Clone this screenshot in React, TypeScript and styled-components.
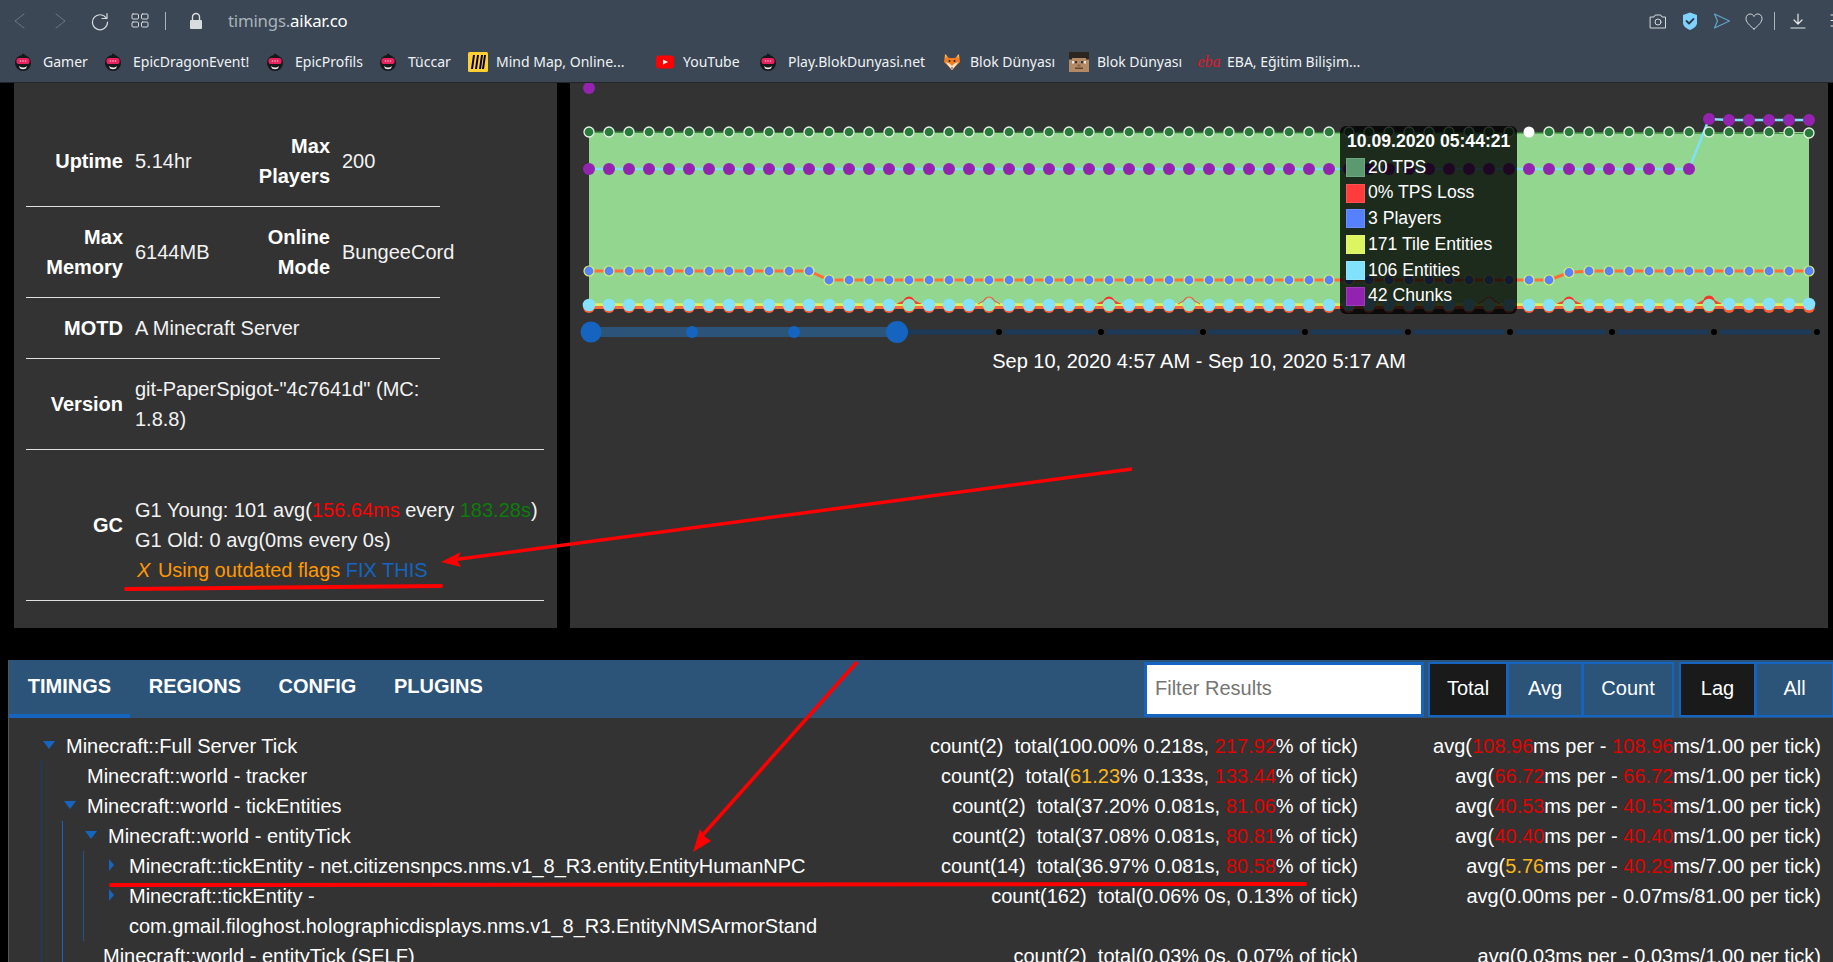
import React from "react"
import styled, { createGlobalStyle } from "styled-components"

const GlobalStyle = createGlobalStyle`
	html, body {
		margin: 0;
		padding: 0;
		background: #000;
		overflow: hidden;
	}
	* {
		box-sizing: border-box;
	}
`

const Page = styled.div`
	position: relative;
	width: 1833px;
	height: 962px;
	overflow: hidden;
	background: #000;
	color: #fff;
	font-family: "Liberation Sans", Arial, sans-serif;
	font-size: 20px;
	line-height: 30px;
`

/* browser chrome */
const Chrome = styled.header`
	height: 83px;
	background: #3b4754;
	border-bottom: 1px solid #20262c;
	font-family: "Noto Sans", sans-serif;
`

const Toolbar = styled.div`
	display: flex;
	align-items: center;
	height: 42px;
	overflow: hidden;
`

const Slot = styled.span<{ $w: number }>`
	flex: none;
	display: flex;
	align-items: center;
	justify-content: center;
	width: ${p => p.$w}px;
`

const Divider = styled.span`
	width: 1px;
	height: 18px;
	background: #aab2ba;
`

const Url = styled.div`
	margin-left: 6px;
	font-size: 16.8px;
	letter-spacing: -0.2px;
	color: #a9b2bb;

	b {
		font-weight: 400;
		color: #fff;
	}
`

const ToolbarEnd = styled.div`
	margin-left: auto;
	display: flex;
	align-items: center;
	margin-right: -10px;
`

const Bookmarks = styled.nav`
	display: flex;
	align-items: center;
	height: 40px;
	padding-left: 15px;
`

const Bookmark = styled.a<{ $w: number }>`
	flex: none;
	display: flex;
	align-items: center;
	gap: 8px;
	width: ${p => p.$w}px;
	font-size: 14px;
	line-height: 20px;
	color: #eef2f6;
	white-space: nowrap;
`

const Favicon = styled.span`
	flex: none;
	display: flex;
	align-items: center;
	justify-content: center;
	width: 20px;
	height: 20px;
`

const EbaMark = styled.span`
	font-family: "Liberation Serif", serif;
	font-style: italic;
	font-size: 16px;
	color: #e0182d;
`

/* top panels */
const TopRow = styled.section`
	display: flex;
	gap: 13px;
	padding-left: 14px;
`

const Panel = styled.div<{ $w: number }>`
	position: relative;
	width: ${p => p.$w}px;
	height: 545px;
	background: #333;
`

const InfoList = styled.div`
	padding: 33px 0 0 12px;
`

const InfoRow = styled.div<{ $wide?: boolean }>`
	display: flex;
	align-items: center;
	gap: 12px;
	width: ${p => (p.$wide ? 518 : 414)}px;
	padding: 15px 0;
	border-bottom: 1px solid #e0e0e0;
`

const InfoLabel = styled.div`
	flex: none;
	width: 97px;
	font-weight: 700;
	text-align: right;
`

const InfoValue = styled.div<{ $w?: number }>`
	flex: none;
	width: ${p => (p.$w ? `${p.$w}px` : "auto")};
	color: #f2f2f2;
	white-space: ${p => (p.$w ? "nowrap" : "normal")};
`

const VersionValue = styled(InfoValue)`
	max-width: 300px;
`

const GcValue = styled(InfoValue)`
	padding-top: 30px;
`

const Tint = styled.span<{ $c: string }>`
	color: ${p => p.$c};
`

const FlagMark = styled.span`
	display: inline-block;
	margin: 0 2px;
	font-style: italic;
	color: #ff9800;
`

const ChartArea = styled.div`
	position: relative;
`

const ChartSvg = styled.svg`
	display: block;
`

const DateRange = styled.div`
	margin-top: -22px;
	text-align: center;
	color: #fff;
`

const Tooltip = styled.div`
	position: absolute;
	left: 770px;
	top: 43px;
	width: 177px;
	height: 188px;
	padding: 3px 7px;
	border-radius: 6px;
	background: rgba(0, 0, 0, 0.8);
	font-size: 17.6px;
	line-height: 25.7px;
`

const TipTitle = styled.div`
	font-weight: 700;
	white-space: nowrap;
`

const TipRow = styled.div`
	display: flex;
	align-items: center;
	gap: 3px;
	white-space: nowrap;
`

const Swatch = styled.span<{ $c: string }>`
	flex: none;
	width: 19px;
	height: 19px;
	margin-left: -1px;
	background: ${p => p.$c};
	border: 1px solid rgba(255, 255, 255, 0.12);
`

/* timings */
const Timings = styled.section`
	margin: 32px 0 0 8px;
	background: #333;
	border-left: 1px solid #555;
`

const TabBar = styled.div`
	display: flex;
	align-items: flex-start;
	height: 58px;
	background: #2c5378;
`

const Tab = styled.div<{ $active?: boolean }>`
	height: 58px;
	padding: 11px 18.8px 0;
	font-weight: 700;
	line-height: 30px;
	border-bottom: 4px solid ${p => (p.$active ? "#1565c0" : "transparent")};
`

const TabTools = styled.div`
	margin-left: auto;
	display: flex;
	padding-top: 2px;
`

const FilterInput = styled.input`
	width: 280px;
	height: 55px;
	margin-right: 5px;
	padding: 0 8px 2px;
	background: #fff;
	border: 3px solid #1565c0;
	font-family: inherit;
	font-size: 20px;
	outline: none;

	&::placeholder {
		color: #757575;
		opacity: 1;
	}
`

const ToggleGroup = styled.div`
	display: flex;
	height: 55px;
	margin-right: 6px;

	&:last-child {
		margin-right: -1px;
	}
`

const ToggleButton = styled.div<{ $w: number; $active?: boolean }>`
	display: flex;
	align-items: center;
	justify-content: center;
	width: ${p => p.$w}px;
	padding-bottom: 3px;
	border: 2px solid #1565c0;
	margin-left: -1px;
	background: ${p => (p.$active ? "#1a1a1a" : "#2c5378")};
`

const Tree = styled.div`
	padding: 13px 0 0 11px;
`

const Group = styled.div<{ $m: number; $c: string }>`
	margin-left: ${p => p.$m}px;
	border-left: 1px solid ${p => p.$c};
`

const Row = styled.div<{ $pad: number }>`
	display: flex;
	align-items: flex-start;
	padding: 0 12px 0 ${p => p.$pad}px;
`

const Name = styled.div`
	position: relative;
	flex: 1;
	min-width: 0;
`

const Caret = styled.svg<{ $top: number }>`
	position: absolute;
	left: -23px;
	top: ${p => p.$top}px;
`

const TotalCol = styled.div`
	flex: none;
	width: 430px;
	text-align: right;
	white-space: pre;
`

const AvgCol = styled.div`
	flex: none;
	width: 463px;
	text-align: right;
	white-space: pre;
`

const Annotations = styled.svg`
	position: absolute;
	left: 0;
	top: 0;
	pointer-events: none;
`

/* small drawn icons */
const Glyph: React.FC<{ w?: number; h?: number; children: React.ReactNode }> = ({ w = 20, h = 20, children }) => (
	<svg width={w} height={h} viewBox={`0 0 ${w} ${h}`} fill="none" strokeLinecap="round" strokeLinejoin="round">
		{children}
	</svg>
)

const Mascot = () => (
	<Glyph>
		<g transform="translate(-2 0)">
			<path d="M9 1.500c3 .5 3.500 2 3.500 3L9 4z" fill="#17181a" />
			<circle cx="10" cy="11" r="8" fill="#17181a" />
			<rect x="3.500" y="6" width="13" height="6" rx="2.600" fill="#e8215f" />
			<path d="M6 14c2.500 2 5.500 2 8 0l-1 2.500c-2 1-4 1-6 0z" fill="#eee" />
			<circle cx="7.500" cy="9" r=".8" fill="#f7b9cb" />
			<circle cx="10" cy="9" r=".8" fill="#f7b9cb" />
			<circle cx="12.500" cy="9" r=".8" fill="#f7b9cb" />
		</g>
	</Glyph>
)

const Miro = () => (
	<Glyph>
		<rect width="20" height="20" rx="1.500" fill="#ffd02f" />
		<path d="M7 3 5 17H3L5 3zM11 3 9 17H7l2-14zM15 3l-2 14h-2l2-14zM18 3l-2 14h-2l2-14z" fill="#050038" />
	</Glyph>
)

const YouTube = () => (
	<Glyph w={18} h={20}>
		<rect y="3.500" width="18" height="13" rx="3" fill="#f00" />
		<path d="M7 7.500 12 10l-5 2.500z" fill="#fff" />
	</Glyph>
)

const Fox = () => (
	<Glyph>
		<path d="M3 2l4 4h6l4-4 1 8-8 8-8-8z" fill="#ef7d22" />
		<path d="M3.500 10 10 18l6.500-8-4 1.500L10 14l-2.500-2.500z" fill="#fbe6d2" />
		<path d="M3 2l2 2-1.500 3zM17 2l-2 2 1.500 3z" fill="#e8c05a" />
		<circle cx="7.500" cy="9" r="1" fill="#3b1d08" />
		<circle cx="12.500" cy="9" r="1" fill="#3b1d08" />
		<path d="M9 15.500h2l-1 1.500z" fill="#3b1d08" />
	</Glyph>
)

const SteveFace = () => (
	<Glyph>
		<rect width="20" height="20" fill="#b48a66" />
		<rect width="20" height="6" fill="#2d2620" />
		<rect y="6" width="3" height="1.500" fill="#2d2620" />
		<rect x="17" y="6" width="3" height="1.500" fill="#2d2620" />
		<rect x="3" y="9" width="5" height="2.500" fill="#efe7dd" />
		<rect x="12" y="9" width="5" height="2.500" fill="#efe7dd" />
		<rect x="5.500" y="9" width="2.500" height="2.500" fill="#3f3226" />
		<rect x="12" y="9" width="2.500" height="2.500" fill="#3f3226" />
		<rect x="8.500" y="12.500" width="3" height="2" fill="#8a6646" />
		<rect x="6" y="15.500" width="8" height="1.500" fill="#5f4532" />
	</Glyph>
)

const bookmarks: { label: string; w: number; icon: React.ReactNode }[] = [
	{ label: "Gamer", w: 90, icon: <Mascot /> },
	{ label: "EpicDragonEvent!", w: 162, icon: <Mascot /> },
	{ label: "EpicProfils", w: 113, icon: <Mascot /> },
	{ label: "Tüccar", w: 88, icon: <Mascot /> },
	{ label: "Mind Map, Online...", w: 187, icon: <Miro /> },
	{ label: "YouTube", w: 105, icon: <YouTube /> },
	{ label: "Play.BlokDunyasi.net", w: 182, icon: <Mascot /> },
	{ label: "Blok Dünyası", w: 127, icon: <Fox /> },
	{ label: "Blok Dünyası", w: 130, icon: <SteveFace /> },
	{ label: "EBA, Eğitim Bilişim...", w: 200, icon: <EbaMark>eba</EbaMark> },
]

/* chart data, in page pixels */
const POINTS = 62
const px = (i: number) => 589 + 20 * i
const idx = Array.from({ length: POINTS }, (_, i) => i)
const bumps: Record<number, number> = { 16: 298, 20: 299, 26: 298, 30: 299, 45: 299, 49: 298, 56: 297 }
const hollowBumps = [20, 30, 45]

const playersY = (i: number) => {
	if (i <= 11) return 271
	if (i <= 48) return 280
	if (i === 49) return 272.5
	return 271
}
const chunksY = (i: number) => (i >= 56 ? (i === 56 ? 119 : 120) : 169)
const entitiesY = (i: number) => (i >= 57 ? 304 : 305)

const line = (fn: (i: number) => number) => idx.map(i => `${px(i)},${fn(i)}`).join(" ")

const sliderTicks = [999, 1101, 1203, 1305, 1408, 1510, 1612, 1714, 1817]

const Chart = () => (
	<ChartSvg width="1258" height="285" viewBox="570 83 1258 285">
		<polygon points={`589,132 1809,132 1809,307 589,307`} fill="#92d68f" />
		<line x1="589" y1="132" x2="1809" y2="133" stroke="#2e7d32" strokeWidth="1.5" />

		<line x1="589" y1="305" x2="1809" y2="305" stroke="#e4ee5c" strokeWidth="3.500" />
		<line x1="589" y1="307.500" x2="1809" y2="307.500" stroke="#ff6a3c" strokeWidth="3" />
		{Object.keys(bumps).map(k => {
			const i = Number(k)
			return hollowBumps.includes(i) ? (
				<g key={k}>
					<path d={`M${px(i) - 11} 304 L${px(i) - 4} 300 M${px(i) + 4} 300 L${px(i) + 11} 304`} stroke="#f0554a" strokeWidth="1" />
					<circle cx={px(i)} cy={bumps[i] + 3} r="5" fill="#a5d98f" stroke="#f0554a" strokeWidth="1.200" />
				</g>
			) : (
				<g key={k}>
					<path d={`M${px(i) - 13} 304 L${px(i)} ${bumps[i]} L${px(i) + 13} 304z`} fill="#f8442c" />
					<circle cx={px(i)} cy={bumps[i] + 4} r="5.500" fill="#f8342c" />
				</g>
			)
		})}
		{idx.map(i => (
			<circle key={i} cx={px(i)} cy="307" r="6" fill="#ff5a30" />
		))}

		<polyline points={line(playersY)} stroke="#ff6e3a" strokeWidth="3" fill="none" />
		{idx.map(i => (
			<circle key={i} cx={px(i)} cy={playersY(i)} r="5" fill="#5682ff" stroke="#dcee72" strokeWidth="1.200" />
		))}

		{idx.map(i => (
			<circle key={i} cx={px(i)} cy={entitiesY(i)} r="6.300" fill={bumps[i] ? "#8ce6cc" : "#84e2ff"} />
		))}

		<polyline points={line(chunksY)} stroke="#7fe0f7" strokeWidth="2.500" fill="none" />
		<circle cx="589" cy="88" r="6" fill="#9423b0" />
		{idx.map(i => (
			<circle key={i} cx={px(i)} cy={chunksY(i)} r="6" fill="#9423b0" />
		))}

		{idx.map(i =>
			i === 47 ? (
				<circle key={i} cx={px(i)} cy="132" r="5.500" fill="#fff" />
			) : (
				<circle key={i} cx={px(i)} cy={i === 61 ? 133 : 132} r="5" fill="#2a7a3c" stroke="#e6f2e6" strokeWidth="1.300" />
			)
		)}

		<rect x="591" y="329.500" width="1226" height="5" fill="#1c3a57" />
		<rect x="591" y="327" width="306" height="10" fill="#2c5378" />
		{sliderTicks.map(x => (
			<g key={x}>
				<circle cx={x} cy="332" r="6" fill="#333" />
				<circle cx={x} cy="332" r="3" fill="#000" />
			</g>
		))}
		<circle cx="692" cy="332" r="6" fill="#1565c0" />
		<circle cx="794" cy="332" r="6" fill="#1565c0" />
		<circle cx="591" cy="332" r="10.500" fill="#1565c0" />
		<circle cx="897" cy="332" r="11" fill="#1565c0" />
	</ChartSvg>
)

type Cell = { v: string; c?: string }
const RED = "#e10000"
const AMBER = "#f9b71e"

const Vals: React.FC<{ parts: (string | Cell)[] }> = ({ parts }) => (
	<>
		{parts.map((p, i) => (typeof p === "string" ? <span key={i}>{p}</span> : <Tint key={i} $c={p.c || RED}>{p.v}</Tint>))}
	</>
)

const Down = () => (
	<Caret $top={9} width="12" height="10" viewBox="0 0 12 10">
		<path d="M0 1h12L6 9z" fill="#1565c0" />
	</Caret>
)

const Right = () => (
	<Caret $top={8} width="12" height="12" viewBox="0 0 12 12">
		<path d="M3 0l5 6-5 6z" fill="#1565c0" />
	</Caret>
)

const TimingRow: React.FC<{
	pad?: number
	caret?: React.ReactNode
	name: string
	total: (string | Cell)[]
	avg: (string | Cell)[]
}> = ({ pad = 45, caret, name, total, avg }) => (
	<Row $pad={pad}>
		<Name>{caret}{name}</Name>
		<TotalCol><Vals parts={total} /></TotalCol>
		<AvgCol><Vals parts={avg} /></AvgCol>
	</Row>
)

export default function App() {
	return (
		<Page>
			<GlobalStyle />
			<Chrome>
				<Toolbar>
					<Slot $w={40}>
						<Glyph><path d="M14 3 5 10l9 7" stroke="#6d7883" strokeWidth="1" /></Glyph>
					</Slot>
					<Slot $w={40}>
						<Glyph><path d="M6 3l9 7-9 7" stroke="#6d7883" strokeWidth="1" /></Glyph>
					</Slot>
					<Slot $w={40}>
						<Glyph>
							<path d="M16.500 7.500A7.500 7.500 0 1 0 17.500 11" stroke="#d5dade" strokeWidth="1.200" />
							<path d="M17 2.500v5h-5" stroke="#d5dade" strokeWidth="1.200" />
						</Glyph>
					</Slot>
					<Slot $w={40}>
						<Glyph>
							<rect x="2" y="3" width="6.500" height="5" rx="1" stroke="#d5dade" />
							<rect x="11.500" y="3" width="6.500" height="5" rx="1" stroke="#d5dade" />
							<rect x="2" y="11" width="6.500" height="5" rx="1" stroke="#d5dade" />
							<rect x="11.500" y="11" width="6.500" height="5" rx="1" stroke="#d5dade" />
						</Glyph>
					</Slot>
					<Slot $w={10}><Divider /></Slot>
					<Slot $w={52}>
						<Glyph>
							<rect x="4" y="9" width="12" height="9" rx="1" fill="#d8dcdf" />
							<path d="M6.500 9V6a3.500 3.500 0 0 1 7 0v3" stroke="#d8dcdf" strokeWidth="1.400" />
						</Glyph>
					</Slot>
					<Url>timings.<b>aikar.co</b></Url>
					<ToolbarEnd>
						<Slot $w={32}>
							<Glyph>
								<path d="M2.500 6h3.500l1.200-2h5.600L14 6h3.500v11h-15z" stroke="#d5dade" />
								<circle cx="10" cy="11" r="3" stroke="#d5dade" />
							</Glyph>
						</Slot>
						<Slot $w={32}>
							<Glyph>
								<path d="M10 1.500 17 4v8c0 3.500-3.500 5.500-7 7-3.500-1.500-7-3.500-7-7V4z" fill="#7fd2ff" />
								<path d="M6.500 10l2.500 2.500 4.500-4.500" stroke="#2b3b4a" strokeWidth="1.800" />
							</Glyph>
						</Slot>
						<Slot $w={32}>
							<Glyph><path d="M2.500 3l15 7-15 7 3-7z" stroke="#5fa4cc" strokeWidth="1.200" /></Glyph>
						</Slot>
						<Slot $w={32}>
							<Glyph>
								<path d="M10 18C5 14 2 11 2 7.500 2 4.500 4.200 3 6.200 3 8 3 9.300 4 10 5.500 10.700 4 12 3 13.800 3c2 0 4.200 1.500 4.200 4.500 0 3.500-3 6.500-8 10.500z" stroke="#d5dade" />
							</Glyph>
						</Slot>
						<Slot $w={8}><Divider /></Slot>
						<Slot $w={4} />
						<Slot $w={32}>
							<Glyph>
								<path d="M10 3v10M6 9l4 4 4-4M3 17h14" stroke="#e4e7ea" strokeWidth="1.200" />
							</Glyph>
						</Slot>
						<Slot $w={9} />
						<Slot $w={20}>
							<Glyph>
								<path d="M8 4h6M8 9.500h6M8 15h6" stroke="#e4e7ea" />
							</Glyph>
						</Slot>
					</ToolbarEnd>
				</Toolbar>
				<Bookmarks>
					{bookmarks.map((b, i) => (
						<Bookmark key={i} $w={b.w}>
							<Favicon>{b.icon}</Favicon>
							{b.label}
						</Bookmark>
					))}
				</Bookmarks>
			</Chrome>

			<TopRow>
				<Panel $w={543}>
					<InfoList>
						<InfoRow>
							<InfoLabel>Uptime</InfoLabel>
							<InfoValue $w={86}>5.14hr</InfoValue>
							<InfoLabel>Max Players</InfoLabel>
							<InfoValue $w={100}>200</InfoValue>
						</InfoRow>
						<InfoRow>
							<InfoLabel>Max Memory</InfoLabel>
							<InfoValue $w={86}>6144MB</InfoValue>
							<InfoLabel>Online Mode</InfoLabel>
							<InfoValue $w={100}>BungeeCord</InfoValue>
						</InfoRow>
						<InfoRow>
							<InfoLabel>MOTD</InfoLabel>
							<InfoValue>A Minecraft Server</InfoValue>
						</InfoRow>
						<InfoRow $wide>
							<InfoLabel>Version</InfoLabel>
							<VersionValue>git-PaperSpigot-"4c7641d" (MC: 1.8.8)</VersionValue>
						</InfoRow>
						<InfoRow $wide>
							<InfoLabel>GC</InfoLabel>
							<GcValue>
								<div>
									G1 Young: 101 avg(<Tint $c="#f00">156.64ms</Tint> every <Tint $c="#0b7d0b">183.28s</Tint>)
								</div>
								<div>G1 Old: 0 avg(0ms every 0s)</div>
								<div>
									<FlagMark>X</FlagMark> <Tint $c="#ff9800">Using outdated flags</Tint> <Tint $c="#1565c0">FIX THIS</Tint>
								</div>
							</GcValue>
						</InfoRow>
					</InfoList>
				</Panel>
				<Panel $w={1258}>
					<ChartArea>
						<Chart />
						<Tooltip>
							<TipTitle>10.09.2020 05:44:21</TipTitle>
							<TipRow><Swatch $c="#5a9a6e" />20 TPS</TipRow>
							<TipRow><Swatch $c="#ff3b3b" />0% TPS Loss</TipRow>
							<TipRow><Swatch $c="#5580ff" />3 Players</TipRow>
							<TipRow><Swatch $c="#dcf560" />171 Tile Entities</TipRow>
							<TipRow><Swatch $c="#80e2ff" />106 Entities</TipRow>
							<TipRow><Swatch $c="#9222b0" />42 Chunks</TipRow>
						</Tooltip>
					</ChartArea>
					<DateRange>Sep 10, 2020 4:57 AM - Sep 10, 2020 5:17 AM</DateRange>
				</Panel>
			</TopRow>

			<Timings>
				<TabBar>
					<Tab $active>TIMINGS</Tab>
					<Tab>REGIONS</Tab>
					<Tab>CONFIG</Tab>
					<Tab>PLUGINS</Tab>
					<TabTools>
						<FilterInput placeholder="Filter Results" />
						<ToggleGroup>
							<ToggleButton $w={80} $active>Total</ToggleButton>
							<ToggleButton $w={76}>Avg</ToggleButton>
							<ToggleButton $w={92}>Count</ToggleButton>
						</ToggleGroup>
						<ToggleGroup>
							<ToggleButton $w={77} $active>Lag</ToggleButton>
							<ToggleButton $w={79}>All</ToggleButton>
						</ToggleGroup>
					</TabTools>
				</TabBar>
				<Tree>
					<TimingRow
						pad={46}
						caret={<Down />}
						name="Minecraft::Full Server Tick"
						total={["count(2)  total(100.00% 0.218s, ", { v: "217.92" }, "% of tick)"]}
						avg={["avg(", { v: "108.96" }, "ms per - ", { v: "108.96" }, "ms/1.00 per tick)"]}
					/>
					<Group $m={21} $c="#123f70">
						<TimingRow
							name="Minecraft::world - tracker"
							total={["count(2)  total(", { v: "61.23", c: AMBER }, "% 0.133s, ", { v: "133.44" }, "% of tick)"]}
							avg={["avg(", { v: "66.72" }, "ms per - ", { v: "66.72" }, "ms/1.00 per tick)"]}
						/>
						<TimingRow
							caret={<Down />}
							name="Minecraft::world - tickEntities"
							total={["count(2)  total(37.20% 0.081s, ", { v: "81.06" }, "% of tick)"]}
							avg={["avg(", { v: "40.53" }, "ms per - ", { v: "40.53" }, "ms/1.00 per tick)"]}
						/>
						<Group $m={20} $c="#1565c0">
							<TimingRow
								caret={<Down />}
								name="Minecraft::world - entityTick"
								total={["count(2)  total(37.08% 0.081s, ", { v: "80.81" }, "% of tick)"]}
								avg={["avg(", { v: "40.40" }, "ms per - ", { v: "40.40" }, "ms/1.00 per tick)"]}
							/>
							<Group $m={20} $c="#1a568f">
								<TimingRow
									caret={<Right />}
									name="Minecraft::tickEntity - net.citizensnpcs.nms.v1_8_R3.entity.EntityHumanNPC"
									total={["count(14)  total(36.97% 0.081s, ", { v: "80.58" }, "% of tick)"]}
									avg={["avg(", { v: "5.76", c: AMBER }, "ms per - ", { v: "40.29" }, "ms/7.00 per tick)"]}
								/>
								<TimingRow
									caret={<Right />}
									name="Minecraft::tickEntity - com.gmail.filoghost.holographicdisplays.nms.v1_8_R3.EntityNMSArmorStand"
									total={["count(162)  total(0.06% 0s, 0.13% of tick)"]}
									avg={["avg(0.00ms per - 0.07ms/81.00 per tick)"]}
								/>
							</Group>
							<TimingRow
								pad={40}
								name="Minecraft::world - entityTick (SELF)"
								total={["count(2)  total(0.03% 0s, 0.07% of tick)"]}
								avg={["avg(0.03ms per - 0.03ms/1.00 per tick)"]}
							/>
						</Group>
					</Group>
				</Tree>
			</Timings>

			<Annotations width="1833" height="962" viewBox="0 0 1833 962">
				<path d="M1132 469 452 560" stroke="#f00" strokeWidth="3.500" fill="none" />
				<path d="M441 562 461 552 457 560 461 567z" fill="#f00" />
				<path d="M126 589 441 586" stroke="#f00" strokeWidth="4" strokeLinecap="round" />
				<path d="M857 662 700 838" stroke="#f00" strokeWidth="3.500" />
				<path d="M693 852 700 829 704 836 711 841z" fill="#f00" />
				<path d="M111 885 1305 884" stroke="#f00" strokeWidth="4" strokeLinecap="round" />
			</Annotations>
		</Page>
	)
}
